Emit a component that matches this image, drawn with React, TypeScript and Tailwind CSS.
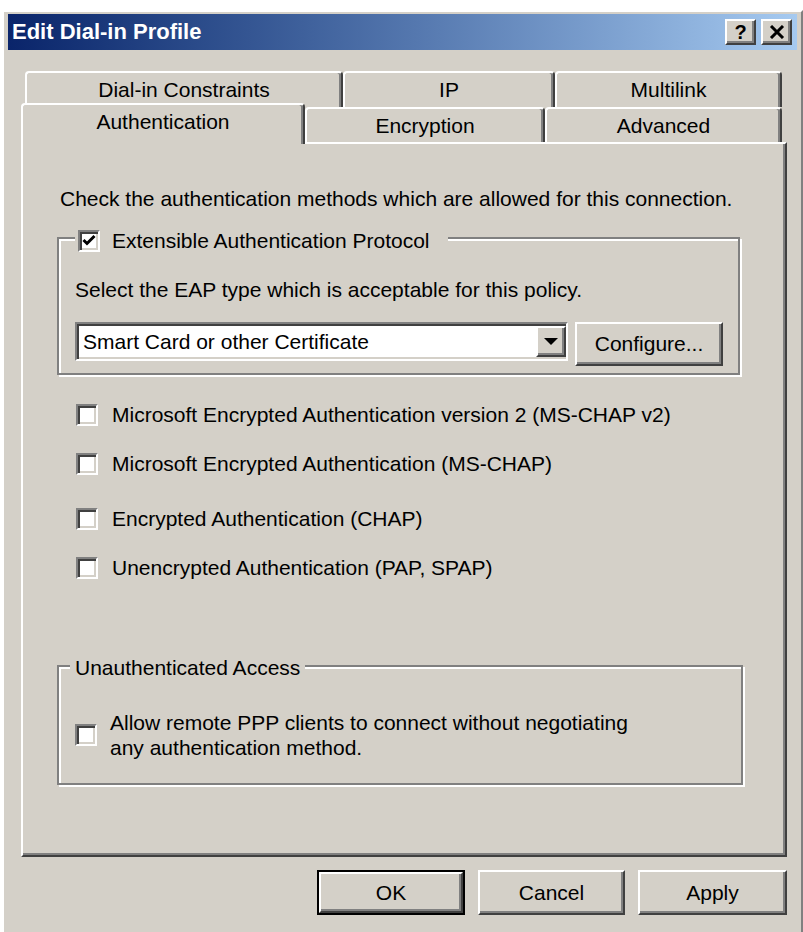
import React from "react";

const face = "bg-[#d4d0c8]";
const raised =
  "border-2 border-t-white border-l-white border-r-[#404040] border-b-[#404040] shadow-[inset_-2px_-2px_0_#808080]";
const tab =
  "flex items-center justify-center bg-[#d4d0c8] border-t-2 border-l-2 border-r-2 border-t-white border-l-white border-r-[#404040] rounded-tl-[4px] rounded-tr-[4px] shadow-[inset_-2px_0_0_#808080]";
const groupBox =
  "relative border-2 border-t-[#808080] border-l-[#808080] border-r-[#808080] border-b-[#808080] shadow-[inset_2px_2px_0_#ffffff,2px_2px_0_#ffffff]";

function CheckBox({ checked = false }: { checked?: boolean }) {
  return (
    <div className="w-[22px] h-[22px] shrink-0 bg-white border-2 border-t-[#808080] border-l-[#808080] border-r-white border-b-white shadow-[inset_2px_2px_0_#404040,inset_-2px_-2px_0_#d4d0c8] flex items-center justify-center">
      {checked && (
        <svg width="14" height="14" viewBox="0 0 14 14">
          <path d="M1.5 6 L5 9.5 L12.5 2" stroke="#000" strokeWidth="3" fill="none" />
        </svg>
      )}
    </div>
  );
}

function CheckRow({ label, mt }: { label: string; mt: string }) {
  return (
    <div className={`flex items-center gap-[14px] ml-[53px] h-[24px] ${mt}`}>
      <CheckBox />
      <span className="leading-[24px] whitespace-nowrap">{label}</span>
    </div>
  );
}

export default function App() {
  return (
    <div className="w-[803px] h-[932px] bg-white overflow-hidden font-['Liberation_Sans',Arial,sans-serif] text-[21px] text-black">
      <div
        className={`ml-[2px] mt-[10px] w-[801px] h-[922px] ${face} border-t-2 border-l-2 border-r-2 border-t-white border-l-white border-r-[#808080] pl-[4px] pr-[4px] pt-[2px] flex flex-col`}
      >
        {/* Title bar */}
        <div className="h-[36px] shrink-0 bg-linear-to-r from-[#0a246a] to-[#a6caf0] flex items-center pl-[4px] pr-[5px]">
          <span className="flex-1 text-white font-bold text-[22px] leading-none whitespace-nowrap">
            Edit Dial-in Profile
          </span>
          <div className="flex gap-[5px]">
            <div className={`${raised} ${face} w-[31px] h-[26px] flex items-center justify-center font-bold text-[20px] leading-none`}>
              ?
            </div>
            <div className={`${raised} ${face} w-[31px] h-[26px] flex items-center justify-center`}>
              <svg width="16" height="14" viewBox="0 0 16 14">
                <path d="M2 1 L14 13 M14 1 L2 13" stroke="#000" strokeWidth="3" fill="none" />
              </svg>
            </div>
          </div>
        </div>

        {/* Tabs back row */}
        <div className="flex ml-[17px] h-[36px] mt-[21px] shrink-0">
          <div className={`${tab} w-[318px]`}>Dial-in Constraints</div>
          <div className={`${tab} w-[212px]`}>IP</div>
          <div className={`${tab} w-[227px]`}>Multilink</div>
        </div>
        {/* Tabs front row */}
        <div className="flex ml-[13px] h-[35px] shrink-0">
          <div className={`${tab} w-[284px] h-[41px] self-start -mt-[4px] pb-[6px] relative z-10`}>
            Authentication
          </div>
          <div className={`${tab} w-[240px]`}>Encryption</div>
          <div className={`${tab} w-[237px]`}>Advanced</div>
        </div>

        {/* Panel */}
        <div className="ml-[13px] w-[766px] h-[715px] shrink-0 border-2 border-t-white border-l-white border-r-[#404040] border-b-[#404040] shadow-[inset_-2px_-2px_0_#808080] flex flex-col">
          <div className="mt-[43px] ml-[37px] leading-[24px] whitespace-nowrap">
            Check the authentication methods which are allowed for this connection.
          </div>

          {/* EAP group */}
          <div className={`${groupBox} mt-[26px] ml-[34px] w-[683px] pt-[39px] pl-[16px] pb-[7px]`}>
            <div className={`absolute left-[16px] top-[-10px] h-[24px] pl-[3px] pr-[18px] ${face} flex items-center gap-[12px]`}>
              <CheckBox checked />
              <span className="leading-[24px] whitespace-nowrap">Extensible Authentication Protocol</span>
            </div>
            <div className="leading-[24px] whitespace-nowrap">
              Select the EAP type which is acceptable for this policy.
            </div>
            <div className="flex items-start gap-[7px] mt-[20px]">
              <div className="w-[493px] h-[39px] bg-white border-2 border-t-[#808080] border-l-[#808080] border-r-white border-b-white shadow-[inset_2px_2px_0_#404040,inset_-2px_-2px_0_#d4d0c8] flex items-stretch p-[2px] pr-0">
                <span className="flex-1 pl-[4px] flex items-center whitespace-nowrap">
                  Smart Card or other Certificate
                </span>
                <div className={`${raised} ${face} w-[30px] flex items-center justify-center`}>
                  <svg width="14" height="8" viewBox="0 0 14 8">
                    <polygon points="0,0 14,0 7,7" fill="#000" />
                  </svg>
                </div>
              </div>
              <div className={`${raised} ${face} w-[148px] h-[44px] flex items-center justify-center whitespace-nowrap`}>
                Configure...
              </div>
            </div>
          </div>

          <CheckRow mt="mt-[28px]" label="Microsoft Encrypted Authentication version 2 (MS-CHAP v2)" />
          <CheckRow mt="mt-[25px]" label="Microsoft Encrypted Authentication (MS-CHAP)" />
          <CheckRow mt="mt-[31px]" label="Encrypted Authentication (CHAP)" />
          <CheckRow mt="mt-[25px]" label="Unencrypted Authentication (PAP, SPAP)" />

          {/* Unauthenticated group */}
          <div className={`${groupBox} mt-[85px] ml-[34px] w-[686px] pt-[43px] pl-[16px] pb-[23px]`}>
            <div className={`absolute left-[11px] top-[-11px] h-[24px] px-[5px] ${face} flex items-center`}>
              <span className="leading-[24px] whitespace-nowrap">Unauthenticated Access</span>
            </div>
            <div className="flex items-center gap-[13px]">
              <CheckBox />
              <div className="leading-[25px] whitespace-nowrap">
                <div>Allow remote PPP clients to connect without negotiating</div>
                <div>any authentication method.</div>
              </div>
            </div>
          </div>
        </div>

        {/* Buttons */}
        <div className="flex justify-end gap-[13px] ml-[13px] w-[766px] mt-[13px]">
          <div className="w-[148px] h-[45px] border-2 border-black">
            <div className={`${raised} ${face} w-full h-full flex items-center justify-center`}>OK</div>
          </div>
          <div className={`${raised} ${face} w-[147px] h-[45px] flex items-center justify-center`}>Cancel</div>
          <div className={`${raised} ${face} w-[149px] h-[45px] flex items-center justify-center`}>Apply</div>
        </div>
      </div>
    </div>
  );
}
